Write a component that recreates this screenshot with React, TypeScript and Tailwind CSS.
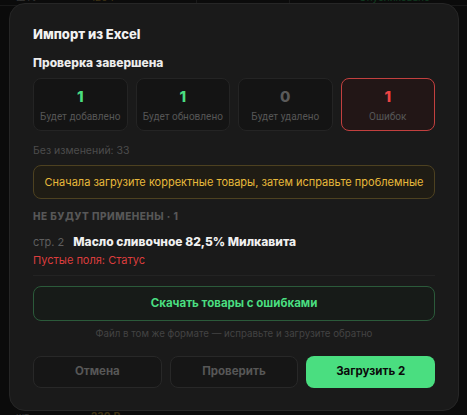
import { ReactNode } from 'react';

type Stat = {
  value: number;
  label: string;
  tone: 'green' | 'gray' | 'red';
};

const stats: Stat[] = [
  { value: 1, label: 'Будет добавлено', tone: 'green' },
  { value: 1, label: 'Будет обновлено', tone: 'green' },
  { value: 0, label: 'Будет удалено', tone: 'gray' },
  { value: 1, label: 'Ошибок', tone: 'red' },
];

function StatCard({ stat }: { stat: Stat }) {
  const isError = stat.tone === 'red';
  const valueColor =
    stat.tone === 'green' ? 'text-[#4ade80]' : stat.tone === 'red' ? 'text-[#ef4444]' : 'text-[#5a5a5a]';

  return (
    <div
      className={`h-[53px] rounded-lg border flex flex-col items-center pt-[8px] ${
        isError ? 'border-[#c2403f] bg-[#221616]' : 'border-[#242424] bg-[#141414]'
      }`}
    >
      <span className={`text-[15px] leading-[20px] font-extrabold ${valueColor}`}>{stat.value}</span>
      <span
        className="mt-[3px] text-[10px] leading-[14px] text-[#565656] whitespace-nowrap"
        style={{ fontFamily: 'Roboto, "Noto Sans", sans-serif' }}
      >
        {stat.label}
      </span>
    </div>
  );
}

function FooterButton({ children, primary }: { children: ReactNode; primary?: boolean }) {
  return (
    <button
      className={`h-[32px] rounded-lg text-[11.5px] font-bold ${
        primary
          ? 'bg-[#4ade80] text-[#0b0b0b]'
          : 'border border-[#282828] bg-[#161616] text-[#575757]'
      }`}
    >
      {children}
    </button>
  );
}

function App() {
  return (
    <div
      className="relative h-[415px] w-[467px] overflow-hidden bg-[#0b0b0b]"
      style={{ fontFamily: 'Inter, "Noto Sans", sans-serif' }}
    >
      {/* page behind the dialog, dimmed by the overlay */}
      <div className="flex h-full flex-col justify-between text-[10px] opacity-25">
        <div className="-mt-[8px] flex h-[14px] items-end border-b border-[#444]">
          <span className="ml-[16px] w-[75px] text-[#aaa]">ШТУ</span>
          <span className="w-[105px] text-[#d4a72c]">120 ₽</span>
          <span className="h-full w-[93px] border-l border-[#444]" />
          <span className="h-full w-[70px] border-l border-[#444]" />
          <span className="text-[#22c55e]">Опубликовано</span>
        </div>
        <div className="-mb-[8px] flex h-[14px] items-start">
          <span className="ml-[16px] w-[75px] text-[#aaa]">шт</span>
          <span className="w-[190px] font-bold text-[#d4a72c]">230 ₽</span>
          <span className="text-[#aaa]">•</span>
        </div>
      </div>

      {/* dialog */}
      <div className="absolute left-[9px] top-[3px] h-[408px] w-[450px] rounded-[16px] border border-[#262626] bg-[#1a1a1a] px-[23px] pt-[21px]">
        <h2 className="text-[13px] leading-[18px] font-extrabold text-[#f2f2f2]">Импорт из Excel</h2>

        <h3 className="mt-3 text-[12px] leading-[16px] font-extrabold text-[#ececec]">Проверка завершена</h3>

        <div className="mt-[7px] grid grid-cols-4 gap-[8px]">
          {stats.map((stat) => (
            <StatCard key={stat.label} stat={stat} />
          ))}
        </div>

        <p className="mt-[13px] text-[10.5px] leading-[14px] text-[#4c4c4c]">Без изменений: 33</p>

        <div className="mt-[7px] flex h-[34px] items-center justify-center rounded-lg border border-[#4d4120] bg-[#1f1c14] text-[11px] text-[#e8b93b]">
          Сначала загрузите корректные товары, затем исправьте проблемные
        </div>

        <p className="mt-[11px] text-[10px] leading-[12px] font-extrabold tracking-[0.05em] text-[#575757]">
          НЕ БУДУТ ПРИМЕНЕНЫ · 1
        </p>

        <div className="mt-3 flex items-baseline gap-[9px] leading-[16px]">
          <span className="text-[11px] text-[#5e5e5e]">стр. 2</span>
          <span className="text-[12px] font-extrabold text-[#f0f0f0]">Масло сливочное 82,5% Милкавита</span>
        </div>
        <p className="mt-[2px] text-[11px] leading-[16px] text-[#dc3d3d]">Пустые поля: Статус</p>

        <div className="mt-[7px] border-t border-[#232323]" />

        <button className="mt-[10px] flex h-[35px] w-full items-center justify-center rounded-lg border border-[#2b5a3a] bg-[#171b18] text-[11.5px] font-bold text-[#4ade80]">
          Скачать товары с ошибками
        </button>

        <p className="mt-[6px] text-center text-[9.7px] leading-[14px] text-[#434343]">
          Файл в том же формате — исправьте и загрузите обратно
        </p>

        <div className="mt-[15px] grid grid-cols-3 gap-[8px]">
          <FooterButton>Отмена</FooterButton>
          <FooterButton>Проверить</FooterButton>
          <FooterButton primary>Загрузить 2</FooterButton>
        </div>
      </div>
    </div>
  );
}

export default App;
